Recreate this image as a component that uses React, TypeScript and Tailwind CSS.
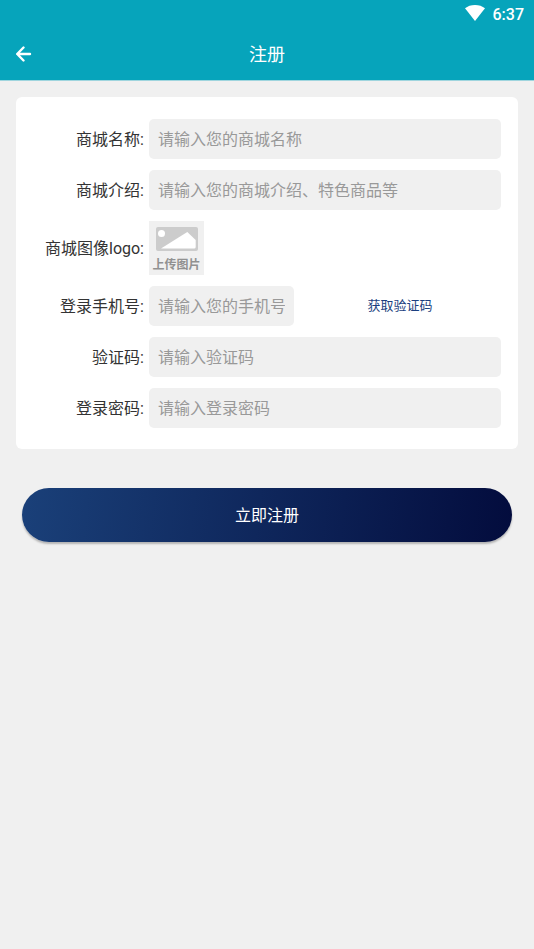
import React from 'react';

function StatusBar() {
  return (
    <div className="flex h-7 items-start justify-end gap-2 pt-[5px] pr-[10px]">
      <svg className="h-4 w-5" viewBox="0 0 20 16" fill="#fff" aria-hidden="true">
        <path d="M10 16 0 3.3C2.6 1.2 6.1 0 10 0s7.400 1.200 10 3.300z" />
      </svg>
      <span className="text-base leading-5 font-medium">6:37</span>
    </div>
  );
}

function Header() {
  return (
    <header className="border-b border-[#9fd5de] bg-[#06a4bb] text-white">
      <StatusBar />
      <div className="grid h-[52px] grid-cols-[48px_1fr_48px] items-center">
        <button type="button" aria-label="返回" className="flex h-12 items-center pl-4">
          <svg
            className="h-4 w-4"
            viewBox="0 0 16 16"
            fill="none"
            stroke="#fff"
            strokeWidth="2.400"
            strokeLinecap="round"
            strokeLinejoin="round"
            aria-hidden="true"
          >
            <path d="M14 8H1.300M7.500 1.500 1.200 8l6.300 6.500" />
          </svg>
        </button>
        <h1 className="pt-[2px] text-center text-lg leading-6 font-normal">注册</h1>
      </div>
    </header>
  );
}

type FieldProps = { id: string; label: string; children: React.ReactNode };

function Field({ id, label, children }: FieldProps) {
  return (
    <div className="grid grid-cols-[111px_1fr] items-center gap-[5px]">
      <label htmlFor={id} className="pt-[2px] text-right leading-6 whitespace-nowrap text-[#333]">
        {label}
      </label>
      {children}
    </div>
  );
}

const inputClass =
  'h-10 w-full min-w-0 rounded-[5px] bg-[#f0f0f0] px-[9px] text-base text-[#333] outline-none placeholder:text-[#999] placeholder:opacity-100';

function UploadField() {
  return (
    <button
      id="logo"
      type="button"
      className="flex h-[54px] w-[55px] flex-col items-center bg-[#f0f0f0] pt-[6px] text-[#919191]"
    >
      <svg className="h-6 w-[42px]" viewBox="0 0 42 24" aria-hidden="true">
        <rect width="42" height="24" rx="2" fill="#ccc" />
        <circle cx="5.500" cy="6.500" r="3.500" fill="#fff" />
        <path d="M5 21.500 31.300 5l8.400 8v7q0 1.500-1.500 1.500z" fill="#fff" />
      </svg>
      <span className="mt-1 text-xs leading-5 font-bold">上传图片</span>
    </button>
  );
}

export default function App() {
  return (
    <div className="min-h-screen bg-[#f0f0f0] font-[Roboto,'Noto_Sans_CJK_SC',sans-serif] text-base">
      <Header />
      <form className="px-4 pt-4" onSubmit={(e) => e.preventDefault()}>
        <div className="flex flex-col gap-[11px] rounded-md bg-white px-[17px] pt-[22px] pb-[21px]">
          <Field id="name" label="商城名称:">
            <input id="name" type="text" placeholder="请输入您的商城名称" className={inputClass} />
          </Field>
          <Field id="intro" label="商城介绍:">
            <input id="intro" type="text" placeholder="请输入您的商城介绍、特色商品等" className={inputClass} />
          </Field>
          <Field id="logo" label="商城图像logo:">
            <UploadField />
          </Field>
          <Field id="phone" label="登录手机号:">
            <div className="grid grid-cols-[145px_1fr] items-center gap-[5px]">
              <input id="phone" type="tel" placeholder="请输入您的手机号" className={inputClass} />
              <button type="button" className="h-10 text-[13px] text-[#1b3f80]">
                获取验证码
              </button>
            </div>
          </Field>
          <Field id="code" label="验证码:">
            <input id="code" type="text" placeholder="请输入验证码" className={inputClass} />
          </Field>
          <Field id="password" label="登录密码:">
            <input id="password" type="password" placeholder="请输入登录密码" className={inputClass} />
          </Field>
        </div>
        <div className="px-[6px] pt-[39px]">
          <button
            type="submit"
            className="h-[54px] w-full rounded-full bg-[linear-gradient(96deg,#1a4079,#030c3d)] pt-[2px] text-base text-white shadow-[0_2px_2px_rgba(0,0,0,0.25)]"
          >
            立即注册
          </button>
        </div>
      </form>
    </div>
  );
}
